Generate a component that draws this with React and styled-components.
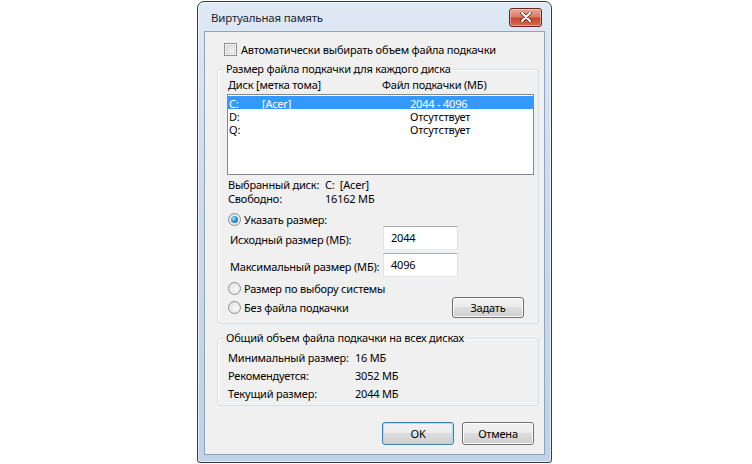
import React from "react";
import styled, { createGlobalStyle } from "styled-components";

const GlobalStyle = createGlobalStyle`
  html, body {
    margin: 0;
    padding: 0;
    background: #ffffff;
  }
  body {
    font-family: "Noto Sans", "Open Sans", sans-serif;
    font-size: 11px;
    letter-spacing: -0.2px;
    color: #000;
    white-space: nowrap;
  }
`;

const Page = styled.div`
  width: 752px;
  height: 464px;
  padding: 1px 0 0 197px;
  box-sizing: border-box;
  overflow: hidden;
`;

const Window = styled.div`
  width: 355px;
  box-sizing: border-box;
  border: 1px solid #2f3a45;
  border-radius: 7px 7px 3px 3px;
  padding: 0 6px 7px 6px;
  background: linear-gradient(180deg, #dfe9f5 0%, #cddcee 40%, #bed2ea 100%);
  box-shadow: inset 0 0 0 1px rgba(255, 255, 255, 0.6);
`;

const TitleBar = styled.div`
  height: 29px;
  display: flex;
  align-items: center;
  justify-content: space-between;
  padding: 1px 3px 0 7px;
  box-sizing: border-box;
`;

const Title = styled.span`
  font-size: 11.5px;
  color: #1c2530;
`;

const CloseButton = styled.div`
  width: 31px;
  height: 17px;
  border: 1px solid #6b2417;
  border-radius: 3px;
  display: flex;
  align-items: center;
  justify-content: center;
  background: linear-gradient(180deg, #e9a99b 0%, #d77b68 45%, #c34a32 55%, #d4694f 100%);
  box-shadow: inset 0 0 0 1px rgba(255, 220, 210, 0.5);
`;

const Content = styled.div`
  border: 1px solid #8ea3bc;
  background: #f0f0f0;
  padding: 10px 5px 9px 12px;
`;

const CheckRow = styled.label`
  display: flex;
  align-items: center;
  gap: 4px;
  height: 14px;
  padding-left: 7px;
`;

const Checkbox = styled.span`
  width: 13px;
  height: 13px;
  box-sizing: border-box;
  border: 1px solid #8e8f8f;
  background: linear-gradient(135deg, #dcdcdc 0%, #f6f6f6 100%);
  box-shadow: inset 0 0 0 1px #f4f4f4, inset 0 0 0 2px #d7d7d7;
`;

const Group = styled.fieldset`
  margin: ${(p) => p.$top || 0}px 0 0 0;
  padding: 0 4px ${(p) => p.$bottom || 4}px 9px;
  border: 1px solid #d5dfe5;
  border-radius: 3px;
  box-shadow: inset 1px 1px 0 #ffffff;
  min-width: 0;
`;

const Legend = styled.legend`
  padding: 0 2px;
  margin-left: -3px;
  line-height: 14px;
  height: 14px;
  color: #000;
`;

const Cols = styled.div`
  display: grid;
  grid-template-columns: ${(p) => p.$first}px 1fr;
  align-items: center;
  height: ${(p) => p.$h || 14}px;
  padding-left: ${(p) => p.$pl || 1}px;
  margin-top: ${(p) => p.$mt || 0}px;
`;

const ListBox = styled.div`
  margin-top: 3px;
  height: 81px;
  box-sizing: border-box;
  border: 1px solid #828790;
  padding-top: 1px;
  background: #ffffff;
`;

const ListRow = styled.div`
  display: grid;
  grid-template-columns: 33px 148px 1fr;
  height: 13px;
  line-height: 13px;
  padding-left: 1px;
  padding-top: 1px;
  box-sizing: border-box;
  background: ${(p) => (p.$selected ? "#3399ff" : "transparent")};
  color: ${(p) => (p.$selected ? "#ffffff" : "#000")};
`;

const RadioRow = styled.div`
  display: flex;
  align-items: center;
  justify-content: space-between;
  height: ${(p) => p.$h || 14}px;
  margin-top: ${(p) => p.$mt || 0}px;
  padding-right: ${(p) => p.$pr || 0}px;
`;

const RadioLabel = styled.label`
  display: flex;
  align-items: center;
  gap: 3px;
  padding-left: 1px;
`;

const Radio = styled.span`
  width: 13px;
  height: 13px;
  box-sizing: border-box;
  border-radius: 50%;
  border: 1px solid #8e8f8f;
  background: radial-gradient(circle at 60% 60%, #f8f8f8 0%, #dcdcdc 100%);
  display: flex;
  align-items: center;
  justify-content: center;
  &::after {
    content: "";
    display: ${(p) => (p.$checked ? "block" : "none")};
    width: 7px;
    height: 7px;
    border-radius: 50%;
    background: radial-gradient(circle at 35% 35%, #9fdcff 0%, #2b8fd6 50%, #0d4f8f 100%);
  }
`;

const InputRow = styled.div`
  display: grid;
  grid-template-columns: 153px 75px;
  align-items: center;
  height: 24px;
  padding-left: 3px;
  margin-top: ${(p) => p.$mt || 0}px;
`;

const InputLabel = styled.span`
  padding-top: 3px;
`;

const TextBox = styled.div`
  height: 24px;
  box-sizing: border-box;
  border: 1px solid #abadb3;
  border-color: #abadb3 #dbdfe6 #e3e9ef #e2e3ea;
  background: #ffffff;
  padding: 3px 0 0 7px;
`;

const Button = styled.button`
  width: 72px;
  height: ${(p) => p.$h || 23}px;
  box-sizing: border-box;
  font-family: inherit;
  font-size: 11px;
  letter-spacing: -0.2px;
  color: #000;
  border-radius: 3px;
  border: 1px solid ${(p) => (p.$default ? "#3c7fb1" : "#707070")};
  background: linear-gradient(180deg, #f2f2f2 0%, #ebebeb 49%, #dddddd 50%, #cfcfcf 100%);
  box-shadow: inset 0 0 0 1px ${(p) => (p.$default ? "#a8e0f7" : "#fcfcfc")};
  padding: 0;
  margin: 0;
`;

const InfoRow = styled.div`
  display: grid;
  grid-template-columns: 127px 1fr;
  align-items: center;
  height: 18px;
  padding-left: 1px;
`;

const Spacer = styled.div`
  height: ${(p) => p.$h}px;
`;

const Footer = styled.div`
  display: flex;
  justify-content: flex-end;
  gap: 8px;
  margin-top: 16px;
  padding-right: 5px;
`;

const CloseIcon = () => (
  <svg width="12" height="10" viewBox="0 0 12 10">
    <path d="M2 1 L10 9 M10 1 L2 9" stroke="#5a1a10" strokeWidth="3.4" strokeLinecap="round" />
    <path d="M2 1 L10 9 M10 1 L2 9" stroke="#ffffff" strokeWidth="2.2" strokeLinecap="round" />
  </svg>
);

const drives = [
  { letter: "C:", label: "[Acer]", size: "2044 - 4096", selected: true },
  { letter: "D:", label: "", size: "Отсутствует" },
  { letter: "Q:", label: "", size: "Отсутствует" },
];

const totals = [
  ["Минимальный размер:", "16 МБ"],
  ["Рекомендуется:", "3052 МБ"],
  ["Текущий размер:", "2044 МБ"],
];

export default function App() {
  return (
    <Page>
      <GlobalStyle />
      <Window>
        <TitleBar>
          <Title>Виртуальная память</Title>
          <CloseButton>
            <CloseIcon />
          </CloseButton>
        </TitleBar>
        <Content>
          <CheckRow>
            <Checkbox />
            <span>Автоматически выбирать объем файла подкачки</span>
          </CheckRow>

          <Group $top={6} $bottom={5}>
            <Legend>Размер файла подкачки для каждого диска</Legend>
            <Cols $first={154} $mt={1}>
              <span>Диск [метка тома]</span>
              <span>Файл подкачки (МБ)</span>
            </Cols>
            <ListBox>
              {drives.map((d) => (
                <ListRow key={d.letter} $selected={d.selected}>
                  <span>{d.letter}</span>
                  <span>{d.label}</span>
                  <span>{d.size}</span>
                </ListRow>
              ))}
            </ListBox>
            <Cols $first={97} $mt={2}>
              <span>Выбранный диск:</span>
              <span>C:&nbsp;&nbsp;[Acer]</span>
            </Cols>
            <Cols $first={97}>
              <span>Свободно:</span>
              <span>16162 МБ</span>
            </Cols>
            <RadioRow $mt={8} $h={13}>
              <RadioLabel>
                <Radio $checked />
                <span>Указать размер:</span>
              </RadioLabel>
            </RadioRow>
            <InputRow $mt={0}>
              <InputLabel>Исходный размер (МБ):</InputLabel>
              <TextBox>2044</TextBox>
            </InputRow>
            <InputRow $mt={3}>
              <InputLabel>Максимальный размер (МБ):</InputLabel>
              <TextBox>4096</TextBox>
            </InputRow>
            <RadioRow $mt={4} $h={14}>
              <RadioLabel>
                <Radio />
                <span>Размер по выбору системы</span>
              </RadioLabel>
            </RadioRow>
            <RadioRow $mt={2} $h={21} $pr={10}>
              <RadioLabel>
                <Radio />
                <span>Без файла подкачки</span>
              </RadioLabel>
              <Button $h={21}>Задать</Button>
            </RadioRow>
          </Group>

          <Group $top={7} $bottom={3}>
            <Legend>Общий объем файла подкачки на всех дисках</Legend>
            <Spacer $h={3} />
            {totals.map(([k, v]) => (
              <InfoRow key={k}>
                <span>{k}</span>
                <span>{v}</span>
              </InfoRow>
            ))}
          </Group>

          <Footer>
            <Button $default>OK</Button>
            <Button>Отмена</Button>
          </Footer>
        </Content>
      </Window>
    </Page>
  );
}
